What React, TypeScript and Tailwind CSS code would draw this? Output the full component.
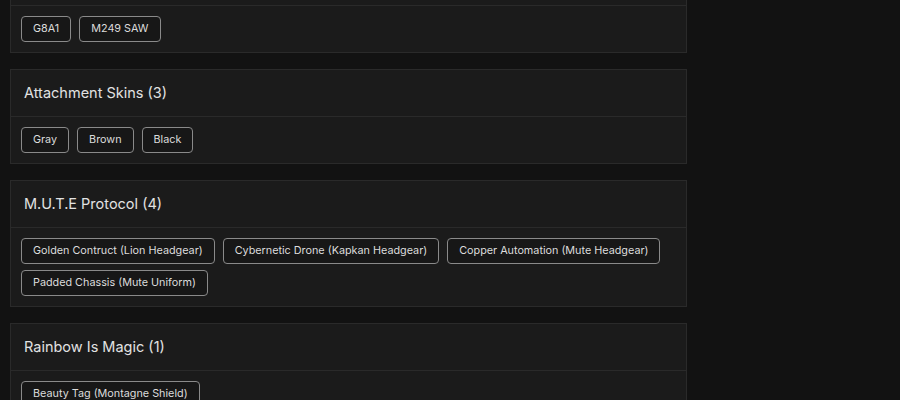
import React from "react";

type Group = { title: string; items: string[] };

const groups: Group[] = [
  { title: "", items: ["G8A1", "M249 SAW"] },
  { title: "Attachment Skins (3)", items: ["Gray", "Brown", "Black"] },
  {
    title: "M.U.T.E Protocol (4)",
    items: [
      "Golden Contruct (Lion Headgear)",
      "Cybernetic Drone (Kapkan Headgear)",
      "Copper Automation (Mute Headgear)",
      "Padded Chassis (Mute Uniform)",
    ],
  },
  { title: "Rainbow Is Magic (1)", items: ["Beauty Tag (Montagne Shield)"] },
];

function Chip({ label }: { label: string }) {
  return (
    <span className="inline-flex h-[26px] items-center rounded-[4px] border border-[#8a8a8a] bg-[#171717] px-[11px] text-[10.8px] leading-none text-[#dcdcdc]">
      {label}
    </span>
  );
}

function Card({ group }: { group: Group }) {
  return (
    <div className="border border-[#2a2a2a] bg-[#1b1b1b]">
      <div className="flex h-[47px] items-center border-b border-[#2a2a2a] px-[13px] text-[14.5px] text-[#e2e2e2]">
        {group.title}
      </div>
      <div className="flex flex-wrap gap-x-[8px] gap-y-[6px] p-[10px]">
        {group.items.map((item) => (
          <Chip key={item} label={item} />
        ))}
      </div>
    </div>
  );
}

export default function App() {
  return (
    <div
      className="h-[400px] w-[900px] overflow-hidden bg-[#121212]"
      style={{ fontFamily: "Inter, 'Noto Sans', sans-serif" }}
    >
      <div className="ml-[10px] mt-[-42px] flex w-[677px] flex-col gap-[16px]">
        {groups.map((g, i) => (
          <Card key={i} group={g} />
        ))}
      </div>
    </div>
  );
}
